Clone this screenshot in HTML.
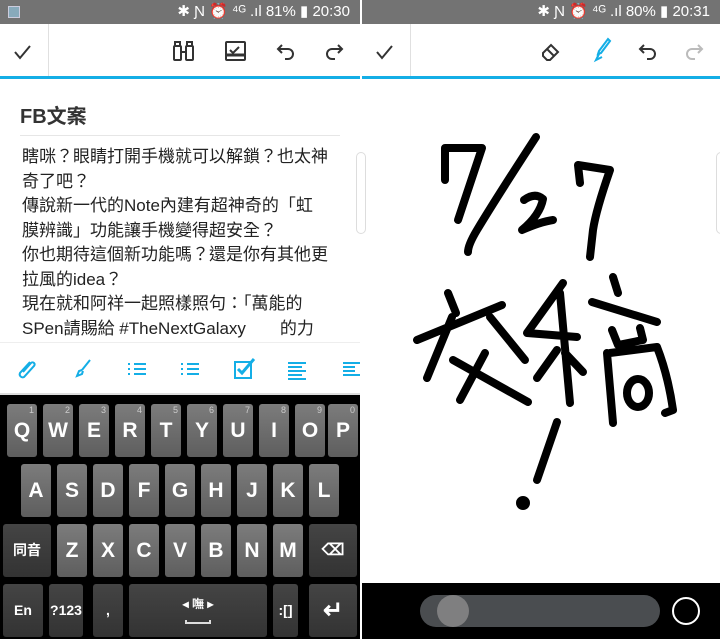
<!DOCTYPE html><html><head><meta charset="utf-8"><style>
*{margin:0;padding:0;box-sizing:border-box}
body{width:720px;height:639px;background:#fff;position:relative;overflow:hidden;font-family:"Liberation Sans","Noto Sans CJK TC",sans-serif}
.a{position:absolute}
.sb{top:0;height:24px;background:#737373;color:#fff;font-size:15px;line-height:24px;text-align:right;padding-right:10px}
.tb{top:24px;height:52px;background:#fff}
.bl{top:76px;height:3px;background:#14aee6}
.k{position:absolute;background:linear-gradient(#7c7c7c,#5e5e5e);border-radius:3px;color:#fff;font-weight:bold;font-size:21px;text-align:center;line-height:53px;height:53px;width:30px}
.d{background:linear-gradient(#444,#333);font-size:14px}
.n{position:absolute;top:1px;right:3px;font-size:9px;line-height:10px;color:#ccc;font-weight:normal}
.txt{left:22px;top:145px;width:330px;font-size:17px;line-height:24.5px;color:#222;height:197px;overflow:hidden;white-space:nowrap}
</style></head><body>
<div class="a sb" style="left:0;width:360px"><span style="position:absolute;left:8px;top:6px;width:12px;height:12px;background:#8ab;border:1px solid #ccd"></span>✱ Ɲ ⏰ ⁴ᴳ .ıl 81% ▮ 20:30</div>
<div class="a sb" style="left:362px;width:358px">✱ Ɲ ⏰ ⁴ᴳ .ıl 80% ▮ 20:31</div>
<div class="a" style="left:360px;top:0;width:2px;height:639px;background:#fff"></div>
<div class="a tb" style="left:0;width:360px"></div>
<div class="a" style="left:48px;top:24px;width:1px;height:52px;background:#e0e0e0"></div>
<div class="a" style="left:410px;top:24px;width:1px;height:52px;background:#e0e0e0"></div>
<div class="a bl" style="left:0;width:360px"></div>
<div class="a bl" style="left:362px;width:358px"></div>
<svg class="a" style="left:0;top:24px" width="720" height="52" fill="none" stroke="#333" stroke-width="2">
<path d="M15 28l5 6 10-12"/>
<path d="M377 28l5 6 10-12"/>
<rect x="174" y="22" width="7" height="14" rx="1"/><rect x="186" y="22" width="7" height="14" rx="1"/><path d="M175 22v-4h5v4M187 22v-4h5v4M181 28h5"/>
<rect x="226" y="18" width="19" height="18" rx="1"/><path d="M230 26l3 3 6-6"/><path d="M226 31h19" stroke-width="3"/>
<path d="M282 21l-4 4 4 4M278 25h10a5 5 0 010 10h-3"/>
<path d="M338 21l4 4-4 4M342 25h-10a5 5 0 000 10h3"/>
<path d="M543 29l8-8 7 7-8 8h-3l-4-4zM547 25l7 7"/>
<path d="M610 17l-9 12-3 1 1-3 9-12zM599 30l-3 6 6-3" stroke="#14aee6"/>
<path d="M644 21l-4 4 4 4M640 25h10a5 5 0 010 10h-3"/>
<path d="M698 21l4 4-4 4M702 25h-10a5 5 0 000 10h3" stroke="#bbb"/>
</svg>
<div class="a" style="left:20px;top:100px;font-size:20px;font-weight:bold;color:#333">FB文案</div>
<div class="a" style="left:20px;top:135px;width:320px;height:1px;background:#e6e6e6"></div>
<div class="a txt">瞎咪？眼睛打開手機就可以解鎖？也太神<br>奇了吧？<br>傳說新一代的Note內建有超神奇的「虹<br>膜辨識」功能讓手機變得超安全？<br>你也期待這個新功能嗎？還是你有其他更<br>拉風的idea？<br>現在就和阿祥一起照樣照句：「萬能的<br>SPen請賜給 #TheNextGalaxy　　的力</div>
<div class="a" style="left:356px;top:152px;width:10px;height:82px;border:1px solid #ddd;border-radius:5px"></div>
<div class="a" style="left:0;top:342px;width:360px;height:53px;background:#fff;border-top:1px solid #eee;border-bottom:2px solid #ddd"></div>
<svg class="a" style="left:0;top:342px" width="360" height="53" fill="none" stroke="#14aee6" stroke-width="2">
<path d="M30 20l-10 11a3 3 0 004 4l10-11a2 2 0 00-3-3l-8 9"/>
<path d="M90 18l-8 10M82 28l-3 1-2 5 5-2 1-3"/>
<path d="M128 22h2M128 27h2M128 32h2M134 22h12M134 27h12M134 32h12"/>
<path d="M181 22h2M181 27h2M181 32h2M187 22h12M187 27h12M187 32h12"/>
<rect x="235" y="20" width="16" height="16"/><path d="M238 27l4 4 12-14" stroke-width="3"/>
<path d="M288 21h18M288 25h14M288 29h18M288 33h14M288 37h18"/>
<path d="M343 21h17M343 25h12M343 29h12M343 33h17"/>
</svg>
<div class="a" style="left:0;top:395px;width:360px;height:244px;background:#000"></div>
<div class="k" style="left:7px;top:404px">Q<span class="n">1</span></div>
<div class="k" style="left:43px;top:404px">W<span class="n">2</span></div>
<div class="k" style="left:79px;top:404px">E<span class="n">3</span></div>
<div class="k" style="left:115px;top:404px">R<span class="n">4</span></div>
<div class="k" style="left:151px;top:404px">T<span class="n">5</span></div>
<div class="k" style="left:187px;top:404px">Y<span class="n">6</span></div>
<div class="k" style="left:223px;top:404px">U<span class="n">7</span></div>
<div class="k" style="left:259px;top:404px">I<span class="n">8</span></div>
<div class="k" style="left:295px;top:404px">O<span class="n">9</span></div>
<div class="k" style="left:328px;top:404px">P<span class="n">0</span></div>
<div class="k" style="left:21px;top:464px">A</div><div class="k" style="left:57px;top:464px">S</div><div class="k" style="left:93px;top:464px">D</div><div class="k" style="left:129px;top:464px">F</div><div class="k" style="left:165px;top:464px">G</div><div class="k" style="left:201px;top:464px">H</div><div class="k" style="left:237px;top:464px">J</div><div class="k" style="left:273px;top:464px">K</div><div class="k" style="left:309px;top:464px">L</div>
<div class="k d" style="left:3px;top:524px;width:48px">同音</div>
<div class="k" style="left:57px;top:524px">Z</div><div class="k" style="left:93px;top:524px">X</div><div class="k" style="left:129px;top:524px">C</div><div class="k" style="left:165px;top:524px">V</div><div class="k" style="left:201px;top:524px">B</div><div class="k" style="left:237px;top:524px">N</div><div class="k" style="left:273px;top:524px">M</div>
<div class="k d" style="left:309px;top:524px;width:48px;font-size:16px">⌫</div>
<div class="k d" style="left:3px;top:584px;width:40px">En</div>
<div class="k d" style="left:49px;top:584px;width:34px">?123</div>
<div class="k d" style="left:93px;top:584px;width:30px">,</div>
<div class="k d" style="left:129px;top:584px;width:138px;font-size:12px;line-height:40px">◂ 嘸 ▸<span style="position:absolute;left:56px;top:36px;width:26px;height:4px;border:2px solid #ddd;border-top:none"></span></div>
<div class="k d" style="left:273px;top:584px;width:25px">:[]</div>
<div class="k d" style="left:309px;top:584px;width:48px;font-size:24px">↵</div>
<div class="a" style="left:716px;top:152px;width:10px;height:82px;border:1px solid #ddd;border-radius:5px"></div>
<svg class="a" style="left:362px;top:0" width="358" height="639" viewBox="362 0 358 639" fill="none" stroke="#000" stroke-width="8" stroke-linecap="round" stroke-linejoin="round">
<path d="M445 180L445 148L482 148L458 220"/>
<path d="M536 137Q495 200 477 230Q468 245 468 252"/>
<path d="M524 200Q535 192 543 199Q540 215 522 230Q540 222 553 220"/>
<path d="M580 183L578 165L610 170Q596 210 593 230L590 257"/>
<path d="M448 293L456 313M417 340L502 305M452 317L427 378M490 317L525 360M453 360L528 402M485 353L460 400"/>
<path d="M563 283L527 333L577 337M560 293L570 403M557 350L537 378M565 353L583 372"/>
<path d="M613 277L618 293M592 302L657 322M612 330L618 345L643 340L640 328M607 353L613 423M610 353L657 347Q668 375 673 410L665 413"/>
<ellipse cx="638" cy="393" rx="11" ry="14"/>
<path d="M557 422L537 480"/><circle cx="523" cy="503" r="3" fill="#000"/>
</svg>
<div class="a" style="left:362px;top:583px;width:358px;height:56px;background:#000"></div>
<div class="a" style="left:420px;top:595px;width:240px;height:32px;border-radius:16px;background:#4a4d50"></div>
<div class="a" style="left:437px;top:595px;width:32px;height:32px;border-radius:16px;background:#7f7f80"></div>
<div class="a" style="left:672px;top:597px;width:28px;height:28px;border-radius:50%;border:2px solid #fff"></div>
</body></html>
